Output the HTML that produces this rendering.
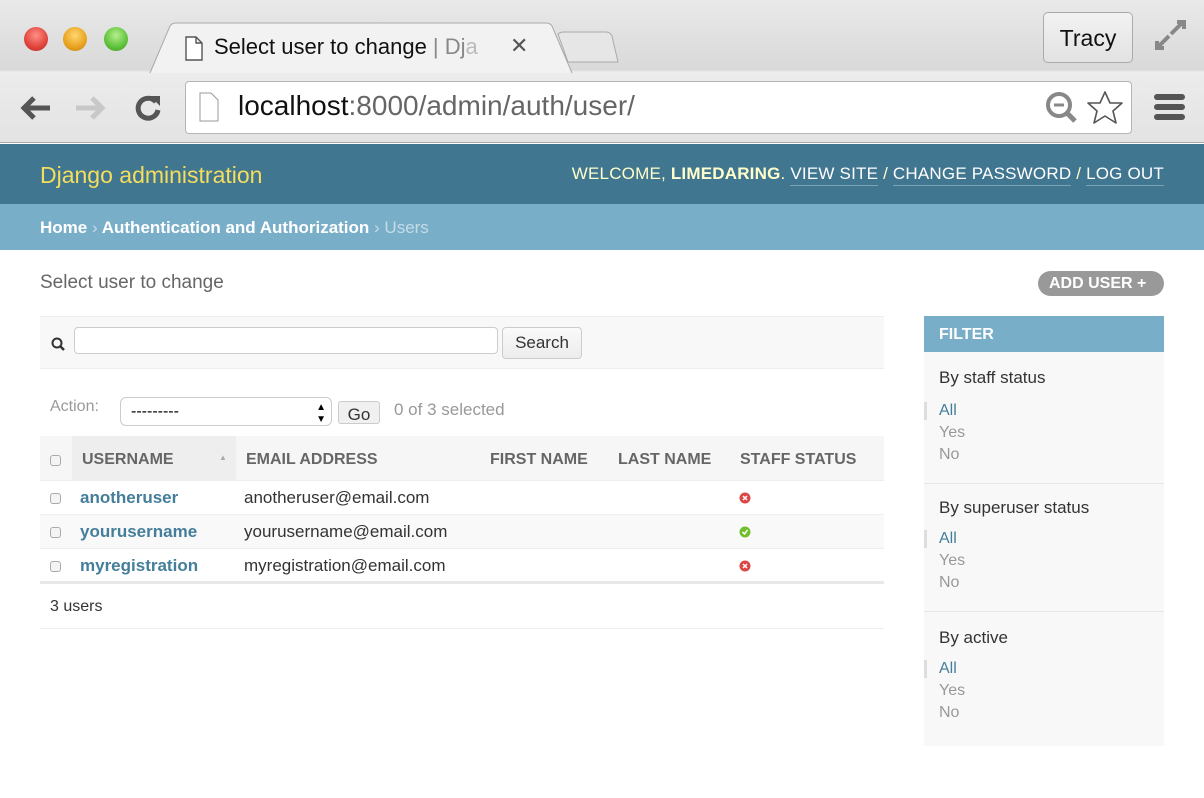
<!DOCTYPE html>
<html><head><meta charset="utf-8"><style>
*{box-sizing:border-box;margin:0;padding:0}
body{width:1204px;height:798px;overflow:hidden;font-family:"Liberation Sans",sans-serif;background:#fff;position:relative}
.a{position:absolute;white-space:nowrap}
#chrome{position:absolute;left:0;top:0;width:1204px;height:143px;background:linear-gradient(#e9e9e9,#d9d9d9 70px,#ececec 72px,#e3e3e3);border-bottom:1px solid #a8a8a8}
.dot{position:absolute;top:27px;width:24px;height:24px;border-radius:50%}
.th{font-weight:bold;color:#666;font-size:16px;top:451px}
.cb{position:absolute;width:11px;height:11px;border:1px solid #aaa;border-radius:3px;background:#f4f4f4}
.fl{left:939px;font-size:16px;color:#999}
.fa{color:#447e9b}
</style></head><body>
<div id="chrome">
<div class="dot" style="left:24px;background:radial-gradient(circle at 50% 35%,#ff8f86,#e0443b 60%,#b52a22)"></div>
<div class="dot" style="left:63px;background:radial-gradient(circle at 50% 35%,#ffd773,#e9a21e 60%,#c0801a)"></div>
<div class="dot" style="left:104px;background:radial-gradient(circle at 50% 35%,#b6ef8c,#5ec23b 60%,#3c9626)"></div>
<svg class="a" style="left:140px;top:22px" width="480" height="52"><path d="M10 51 L30 4 Q32 1 36 1 L406 1 Q410 1 412 4 L432 51" fill="#f2f2f2" stroke="#aaa"/><path d="M418 12 Q420 10 424 10 L466 10 Q470 10 472 14 L478 40 L428 40 Z" fill="#e6e6e6" stroke="#aaa"/></svg>
<svg class="a" style="left:184px;top:36px" width="20" height="26"><path d="M2 1 H12 L18 7 V24 H2 Z M12 1 V7 H18" fill="#fff" stroke="#555" stroke-width="1.4"/></svg>
<div class="a" style="left:214px;top:34px;font-size:22px;color:#111">Select user to change <span style="color:#888">| Dj<span style="color:#bbb">a</span></span></div>
<div class="a" style="left:510px;top:33px;font-size:22px;color:#555">✕</div>
<div class="a" style="left:1043px;top:12px;width:90px;height:51px;border:1px solid #aaa;border-radius:5px;background:linear-gradient(#f2f2f2,#e2e2e2);font-size:23px;text-align:center;line-height:50px;color:#111">Tracy</div>
<svg class="a" style="left:1155px;top:20px" width="32" height="30"><path d="M16 14 L28 2 M22 2 H29 V9 M14 16 L2 28 M2 21 V28 H9" stroke="#888" stroke-width="4" fill="none"/></svg>
<svg class="a" style="left:18px;top:92px" width="150" height="32"><path d="M32 16 H6 M16 6 L6 16 L16 26" stroke="#555" stroke-width="5" fill="none"/><path d="M58 16 H84 M74 6 L84 16 L74 26" stroke="#c8c8c8" stroke-width="5" fill="none"/><path d="M138 10 A10 10 0 1 0 140 18" stroke="#555" stroke-width="5" fill="none"/><path d="M132 4 L142 4 L142 14 Z" fill="#555"/></svg>
<div class="a" style="left:185px;top:81px;width:947px;height:53px;background:#fff;border:1px solid #b5b5b5;border-radius:4px"></div>
<svg class="a" style="left:199px;top:92px" width="20" height="30"><path d="M1 1 H12 L19 8 V29 H1 Z" fill="#fff" stroke="#999"/></svg>
<div class="a" style="left:238px;top:90px;font-size:28px;color:#111">localhost<span style="color:#666">:8000/admin/auth/user/</span></div>
<svg class="a" style="left:1044px;top:90px" width="90" height="36"><circle cx="15" cy="15" r="11" stroke="#888" stroke-width="4" fill="none"/><path d="M10 15 H20" stroke="#888" stroke-width="3"/><path d="M23 23 L31 31" stroke="#888" stroke-width="5"/><path d="M61 2 L66 13 L78 13 L69 21 L72 33 L61 26 L50 33 L53 21 L44 13 L56 13 Z" fill="#fff" stroke="#555" stroke-width="1.6" stroke-linejoin="round"/></svg>
<div class="a" style="left:1154px;top:94px;width:31px;height:6px;border-radius:3px;background:#555"></div>
<div class="a" style="left:1154px;top:104px;width:31px;height:6px;border-radius:3px;background:#555"></div>
<div class="a" style="left:1154px;top:114px;width:31px;height:6px;border-radius:3px;background:#555"></div>
</div>
<div class="a" style="left:0;top:144px;width:1204px;height:60px;background:#417690"></div>
<div class="a" style="left:40px;top:162px;font-size:23px;color:#f5dd5d">Django administration</div>
<div class="a" style="right:40px;top:164px;font-size:17px;color:#ffc;letter-spacing:.2px">WELCOME, <b>LIMEDARING</b>. <span style="color:#fff;border-bottom:1px solid #7ea3b5;padding-bottom:2px">VIEW SITE</span> / <span style="color:#fff;border-bottom:1px solid #7ea3b5;padding-bottom:2px">CHANGE PASSWORD</span> / <span style="color:#fff;border-bottom:1px solid #7ea3b5;padding-bottom:2px">LOG OUT</span></div>
<div class="a" style="left:0;top:204px;width:1204px;height:46px;background:#79aec8"></div>
<div class="a" style="left:40px;top:218px;font-size:17px;color:#fff;font-weight:bold">Home <span style="font-weight:normal;color:#c4dce8">›</span> Authentication and Authorization <span style="font-weight:normal;color:#c4dce8">› Users</span></div>
<div class="a" style="left:40px;top:272px;font-size:19px;color:#666">Select user to change</div>
<div class="a" style="left:1038px;top:271px;width:126px;height:25px;border-radius:13px;background:#999;color:#fff;font-weight:bold;font-size:16px;line-height:25px;padding-left:11px">ADD USER +</div>
<div class="a" style="left:40px;top:316px;width:844px;height:53px;background:#f8f8f8;border-top:1px solid #eee;border-bottom:1px solid #eee"></div>
<svg class="a" style="left:51px;top:337px" width="16" height="16"><circle cx="6" cy="6" r="4.5" stroke="#333" stroke-width="2" fill="none"/><path d="M9 9 L13 13" stroke="#333" stroke-width="2.5"/></svg>
<div class="a" style="left:74px;top:327px;width:424px;height:27px;background:#fff;border:1px solid #ccc;border-radius:4px"></div>
<div class="a" style="left:502px;top:327px;width:80px;height:32px;border:1px solid #ccc;border-radius:4px;background:linear-gradient(#fafafa,#ececec);font-size:17px;text-align:center;line-height:30px;color:#333">Search</div>
<div class="a" style="left:50px;top:398px;font-size:16px;color:#999">Action:</div>
<div class="a" style="left:120px;top:397px;width:212px;height:29px;border:1px solid #ccc;border-radius:6px;background:#fff;font-size:16px;padding-left:10px;line-height:28px">---------<span style="position:absolute;right:5px;top:0;font-size:10px;line-height:12px;top:4px">▲<br>▼</span></div>
<div class="a" style="left:338px;top:401px;width:42px;height:23px;border:1px solid #ccc;border-radius:3px;background:#f0f0f0;font-size:17px;text-align:center;line-height:26px;color:#333">Go</div>
<div class="a" style="left:394px;top:400px;font-size:17px;color:#999">0 of 3 selected</div>
<div class="a" style="left:40px;top:436px;width:844px;height:45px;background:#f6f6f6;border-bottom:1px solid #eee"></div>
<div class="a" style="left:72px;top:436px;width:164px;height:45px;background:#eee"></div>
<div class="cb" style="left:50px;top:455px"></div>
<div class="a th" style="left:82px">USERNAME</div>
<div class="a" style="left:219px;top:453px;font-size:8px;color:#aaa">▲</div>
<div class="a th" style="left:246px">EMAIL ADDRESS</div>
<div class="a th" style="left:490px">FIRST NAME</div>
<div class="a th" style="left:618px">LAST NAME</div>
<div class="a th" style="left:740px">STAFF STATUS</div>
<div class="a" style="left:40px;top:481px;width:844px;height:34px;background:#fff;border-bottom:1px solid #eee"></div>
<div class="a" style="left:40px;top:515px;width:844px;height:34px;background:#f9f9f9;border-bottom:1px solid #eee"></div>
<div class="a" style="left:40px;top:549px;width:844px;height:35px;background:#fff;border-bottom:3px solid #e8e8e8"></div>
<div class="cb" style="left:50px;top:493px"></div><div class="cb" style="left:50px;top:527px"></div><div class="cb" style="left:50px;top:561px"></div>
<div class="a" style="left:80px;top:488px;font-size:17px;font-weight:bold;color:#447e9b">anotheruser</div>
<div class="a" style="left:80px;top:522px;font-size:17px;font-weight:bold;color:#447e9b">yourusername</div>
<div class="a" style="left:80px;top:556px;font-size:17px;font-weight:bold;color:#447e9b">myregistration</div>
<div class="a" style="left:244px;top:488px;font-size:17px;color:#333">anotheruser@email.com</div>
<div class="a" style="left:244px;top:522px;font-size:17px;color:#333">yourusername@email.com</div>
<div class="a" style="left:244px;top:556px;font-size:17px;color:#333">myregistration@email.com</div>
<svg class="a" style="left:739px;top:492px" width="12" height="80"><circle cx="6" cy="6" r="5.5" fill="#dd4646"/><path d="M4 4 L8 8 M8 4 L4 8" stroke="#fff" stroke-width="1.5"/><circle cx="6" cy="40" r="5.5" fill="#70bf2b"/><path d="M3.5 40 L5.5 42 L8.5 38" stroke="#fff" stroke-width="1.5" fill="none"/><circle cx="6" cy="74" r="5.5" fill="#dd4646"/><path d="M4 72 L8 76 M8 72 L4 76" stroke="#fff" stroke-width="1.5"/></svg>
<div class="a" style="left:50px;top:598px;font-size:16px;color:#333">3 users</div>
<div class="a" style="left:40px;top:628px;width:844px;height:1px;background:#eee"></div>
<div class="a" style="left:924px;top:316px;width:240px;height:430px;background:#f8f8f8"></div>
<div class="a" style="left:924px;top:316px;width:240px;height:36px;background:#79aec8;color:#fff;font-weight:bold;font-size:16px;padding:10px 15px">FILTER</div>
<div class="a" style="left:939px;top:368px;font-size:17px;color:#333">By staff status</div>
<div class="a" style="left:924px;top:402px;width:3px;height:18px;background:#ddd"></div>
<div class="a fl fa" style="top:402px">All</div><div class="a fl" style="top:424px">Yes</div><div class="a fl" style="top:446px">No</div>
<div class="a" style="left:924px;top:483px;width:240px;height:1px;background:#e6e6e6"></div>
<div class="a" style="left:939px;top:498px;font-size:17px;color:#333">By superuser status</div>
<div class="a" style="left:924px;top:530px;width:3px;height:18px;background:#ddd"></div>
<div class="a fl fa" style="top:530px">All</div><div class="a fl" style="top:552px">Yes</div><div class="a fl" style="top:574px">No</div>
<div class="a" style="left:924px;top:611px;width:240px;height:1px;background:#e6e6e6"></div>
<div class="a" style="left:939px;top:628px;font-size:17px;color:#333">By active</div>
<div class="a" style="left:924px;top:660px;width:3px;height:18px;background:#ddd"></div>
<div class="a fl fa" style="top:660px">All</div><div class="a fl" style="top:682px">Yes</div><div class="a fl" style="top:704px">No</div>
</body></html>
